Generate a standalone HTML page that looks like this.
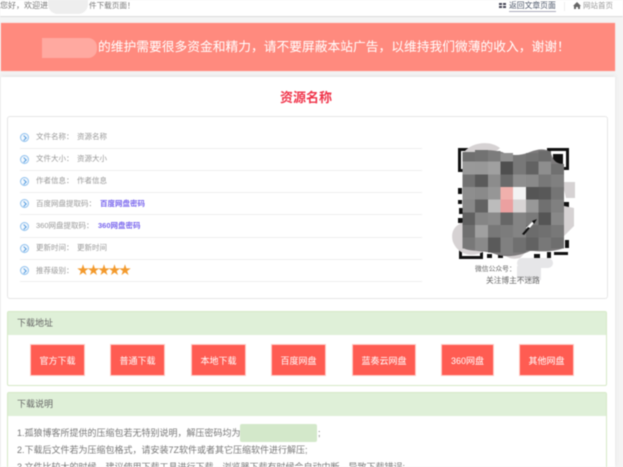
<!DOCTYPE html>
<html lang="zh"><head><meta charset="utf-8"><title>下载页面</title>
<style>
html,body{margin:0;padding:0;width:623px;height:467px;overflow:hidden;background:#f4f4f4}
body{font-family:"Liberation Sans","Noto Sans CJK SC",sans-serif;position:relative}
#w{position:absolute;left:0;top:0;width:623px;height:467px;overflow:hidden;filter:blur(.5px)}
.a{position:absolute;white-space:nowrap}
.r{position:absolute;left:20px;width:402px;height:1px;background:#eee}
.t{position:absolute;left:36px;font-size:7.5px;line-height:12px;color:#999;white-space:nowrap}
.v{position:absolute;font-size:7.5px;line-height:12px;color:#999;white-space:nowrap}
.v.k{color:#7b68ee;font-weight:bold}
.c{position:absolute;left:20px;width:9px;height:9px;border:1px solid #8fc1ee;border-radius:50%;box-sizing:border-box;background:#f4f9fe}
.c:after{content:"";position:absolute;left:1px;top:2px;width:3px;height:3px;border-top:1px solid #5a9fe0;border-right:1px solid #5a9fe0;transform:rotate(45deg)}
.b{position:absolute;top:344px;height:32px;line-height:32px;background:#ff5c52;border:1px solid #ffc9c4;box-sizing:border-box;color:#fff;font-size:9px;text-align:center}
.p{position:absolute;left:7px;width:600px;background:#fff;border:1px solid #d6e9c6;box-sizing:border-box;border-radius:2px}
.h{background:#dff0d8;height:23px;line-height:23px;padding-left:9px;font-size:9px;color:#666}
.l{position:absolute;left:17px;font-size:9px;line-height:14px;color:#777;white-space:nowrap}
</style></head><body><div id="w">
<div class="a" style="left:0;top:0;width:623px;height:16px;background:#fff;border-bottom:1px solid #ddd"></div>
<div class="a" style="left:0;top:0;font-size:8px;line-height:11px;color:#777">您好，欢迎进</div>
<div class="a" style="left:89px;top:0;font-size:7.6px;line-height:11px;color:#777">件下载页面！</div>
<div class="a" style="left:48px;top:0;width:40px;height:14px;background:#eee;border-radius:0 0 10px 10px"></div>
<svg class="a" style="left:499px;top:2px" width="8" height="8" viewBox="0 0 8 8"><path fill="#445" d="M0 1h3v2H0zM4 1h3v2H4zM0 4h3v2H0zM4 4h3v2H4z"/></svg>
<div class="a" style="left:509px;top:0;font-size:7.8px;line-height:11px;color:#4a5568;border-bottom:1px solid #aab">返回文章页面</div>
<svg class="a" style="left:573px;top:2px" width="8" height="8" viewBox="0 0 8 8"><path fill="#666" d="M4 0L0 4h1v3h2V5h2v2h2V4h1z"/></svg>
<div class="a" style="left:583px;top:0;font-size:7.5px;line-height:11px;color:#999">网站首页</div>
<div class="a" style="left:564px;top:2px;width:1px;height:9px;background:#eee"></div>

<div class="a" style="left:1px;top:23px;width:614px;height:48px;background:#ff8a7e;box-shadow:0 0 1px #fbb"></div>
<div class="a" style="left:98px;top:37px;font-size:12.75px;line-height:20px;color:#fff">的维护需要很多资金和精力，请不要屏蔽本站广告，以维持我们微薄的收入，谢谢！</div>
<div class="a" style="left:42px;top:38px;width:55px;height:20px;background:#ffa9a0;border-radius:0 9px 9px 0"></div>

<div class="a" style="left:1px;top:77px;width:614px;height:390px;background:#fff;box-shadow:0 -1px 4px #e2e2e2"></div>
<div class="a" style="left:236px;top:88px;width:140px;text-align:center;font-size:13px;line-height:20px;font-weight:bold;color:#f0344a">资源名称</div>

<div class="a" style="left:7px;top:116px;width:601px;height:183px;border:1px solid #e6e6e6;border-radius:3px;box-sizing:border-box"></div>

<div class="c" style="top:133px"></div><div class="t" style="top:131px">文件名称：</div><div class="v" style="left:77px;top:131px">资源名称</div><div class="r" style="top:148px"></div>
<div class="c" style="top:155px"></div><div class="t" style="top:153px">文件大小：</div><div class="v" style="left:77px;top:153px">资源大小</div><div class="r" style="top:170px"></div>
<div class="c" style="top:177px"></div><div class="t" style="top:175px">作者信息：</div><div class="v" style="left:77px;top:175px">作者信息</div><div class="r" style="top:192px"></div>
<div class="c" style="top:199px"></div><div class="t" style="top:198px">百度网盘提取码：</div><div class="v k" style="left:100px;top:198px">百度网盘密码</div><div class="r" style="top:214px"></div>
<div class="c" style="top:222px"></div><div class="t" style="top:220px">360网盘提取码：</div><div class="v k" style="left:98px;top:220px">360网盘密码</div><div class="r" style="top:237px"></div>
<div class="c" style="top:244px"></div><div class="t" style="top:242px">更新时间：</div><div class="v" style="left:77px;top:242px">更新时间</div><div class="r" style="top:259px"></div>
<div class="c" style="top:266px"></div><div class="t" style="top:265px">推荐级别：</div><div class="r" style="top:281px"></div>
<div class="a" style="left:77px;top:263px;font-size:12px;line-height:14px;letter-spacing:-1.5px;color:#f39a2d">★★★★★</div>

<svg class="a" style="left:450px;top:140px" width="125" height="125" viewBox="0 0 125 125" shape-rendering="crispEdges">
<g fill="#111">
<path fill-rule="evenodd" d="M8 8h24v24H8zM11 11v18h18V11zM97 8h22v22H97zM100 11v16h16V11zM9 95h24v24H9zM12 98v18h18V98z"/>
<path d="M103 14h10v10h-10zM15 101h12v12H15zM8 48h4v6H8zM8 60h4v4H8zM9 68h5v6H9zM8 78h6v5H8zM114 62h5v6h-5zM114 72h3v4h-3zM114 80h5v6h-5zM37 114h5v4h-5zM48 115h5v3h-5zM84 114h6v4h-6zM97 112h4v6h-4zM104 112h14v3h-14zM115 100h4v8h-4z"/>
</g></svg>
<svg class="a" style="left:450px;top:140px" width="125" height="125" viewBox="0 0 125 125">
<path fill="#d6d2d3" d="M14 12C22 2 40 0 50 8 40 18 25 20 14 12zM3 102c-3-10 2-18 12-20l18 10v20C20 118 8 114 3 102zM112 42h13v16h-9zM114 66l10 2v18l-10 10zM50 108h30l-10 10c-8 2-16 0-20-10z"/>
<path fill="#7c7a7b" d="M13 22C20 10 35 8 52 12 60 16 70 16 80 12 90 8 100 8 102 16 104 22 108 24 114 24V108C100 113 90 111 80 111 70 116 55 118 45 114 35 110 20 112 13 108z"/>
<g shape-rendering="crispEdges">
<rect x="12.5" y="12" width="12.7" height="9.7" fill="#6f6f6f"/><rect x="25.2" y="10" width="12.7" height="11.7" fill="#727272"/><rect x="37.9" y="11" width="12.7" height="10.7" fill="#7c7c7c"/><rect x="50.5" y="13" width="12.7" height="8.7" fill="#909090"/><rect x="63.2" y="15" width="12.7" height="6.7" fill="#787878"/><rect x="75.9" y="13" width="12.7" height="8.7" fill="#727272"/><rect x="88.5" y="11" width="12.7" height="10.7" fill="#6c6c6c"/>
<rect x="12.5" y="21.7" width="12.7" height="12.7" fill="#999"/><rect x="25.2" y="21.7" width="12.7" height="12.7" fill="#989898"/><rect x="37.9" y="21.7" width="12.7" height="12.7" fill="#a0a0a0"/><rect x="50.5" y="21.7" width="12.7" height="12.7" fill="#4f4f4f"/><rect x="63.2" y="21.7" width="12.7" height="12.7" fill="#787878"/><rect x="75.9" y="21.7" width="12.7" height="12.7" fill="#626262"/><rect x="88.5" y="21.7" width="12.7" height="12.7" fill="#8e8e8e"/><rect x="101.2" y="24" width="12.7" height="10.4" fill="#707070"/>
<rect x="12.5" y="34.3" width="12.7" height="12.7" fill="#727272"/><rect x="25.2" y="34.3" width="12.7" height="12.7" fill="#5a5a5a"/><rect x="37.9" y="34.3" width="12.7" height="12.7" fill="#8c8c8c"/><rect x="50.5" y="34.3" width="12.7" height="12.7" fill="#6a6a6a"/><rect x="63.2" y="34.3" width="12.7" height="12.7" fill="#8e8e8e"/><rect x="75.9" y="34.3" width="12.7" height="12.7" fill="#8a8a8a"/><rect x="88.5" y="34.3" width="12.7" height="12.7" fill="#787878"/><rect x="101.2" y="34.3" width="12.7" height="12.7" fill="#808080"/>
<rect x="12.5" y="47" width="12.7" height="12.7" fill="#8e8e8e"/><rect x="25.2" y="47" width="12.7" height="12.7" fill="#8a8a8a"/><rect x="37.9" y="47" width="12.7" height="12.7" fill="#969696"/><rect x="50.5" y="47" width="12.7" height="12.7" fill="#f0b0ac"/><rect x="63.2" y="47" width="12.7" height="12.7" fill="#f3f3f3"/><rect x="75.9" y="47" width="12.7" height="12.7" fill="#555"/><rect x="88.5" y="47" width="12.7" height="12.7" fill="#585858"/><rect x="101.2" y="47" width="12.7" height="12.7" fill="#757575"/>
<rect x="12.5" y="59.7" width="12.7" height="12.7" fill="#888"/><rect x="25.2" y="59.7" width="12.7" height="12.7" fill="#626262"/><rect x="37.9" y="59.7" width="12.7" height="12.7" fill="#bcbcbc"/><rect x="50.5" y="59.7" width="12.7" height="12.7" fill="#eba0a0"/><rect x="63.2" y="59.7" width="12.7" height="12.7" fill="#d8d4d4"/><rect x="75.9" y="59.7" width="12.7" height="12.7" fill="#989898"/><rect x="88.5" y="59.7" width="12.7" height="12.7" fill="#707070"/><rect x="101.2" y="59.7" width="12.7" height="12.7" fill="#808080"/>
<rect x="12.5" y="72.3" width="12.7" height="12.7" fill="#606060"/><rect x="25.2" y="72.3" width="12.7" height="12.7" fill="#858585"/><rect x="37.9" y="72.3" width="12.7" height="12.7" fill="#8a8a8a"/><rect x="50.5" y="72.3" width="12.7" height="12.7" fill="#666"/><rect x="63.2" y="72.3" width="12.7" height="12.7" fill="#848484"/><rect x="75.9" y="72.3" width="12.7" height="12.7" fill="#7a7a7a"/><rect x="88.5" y="72.3" width="12.7" height="12.7" fill="#555"/><rect x="101.2" y="72.3" width="12.7" height="12.7" fill="#888"/>
<rect x="12.5" y="85" width="12.7" height="12.7" fill="#707070"/><rect x="25.2" y="85" width="12.7" height="12.7" fill="#a0a0a0"/><rect x="37.9" y="85" width="12.7" height="12.7" fill="#787878"/><rect x="50.5" y="85" width="12.7" height="12.7" fill="#7c7c7c"/><rect x="63.2" y="85" width="12.7" height="12.7" fill="#848484"/><rect x="75.9" y="85" width="12.7" height="12.7" fill="#6c6c6c"/><rect x="88.5" y="85" width="12.7" height="12.7" fill="#707070"/><rect x="101.2" y="85" width="12.7" height="12.7" fill="#787878"/>
<rect x="12.5" y="97.7" width="12.7" height="10.7" fill="#787878"/><rect x="25.2" y="97.7" width="12.7" height="12.7" fill="#8a8a8a"/><rect x="37.9" y="97.7" width="12.7" height="15" fill="#5a5a5a"/><rect x="50.5" y="97.7" width="12.7" height="17" fill="#808080"/><rect x="63.2" y="97.7" width="12.7" height="15" fill="#707070"/><rect x="75.9" y="97.7" width="12.7" height="12.7" fill="#626262"/><rect x="88.5" y="97.7" width="12.7" height="12.7" fill="#787878"/><rect x="101.2" y="97.7" width="12.7" height="11" fill="#6e6e6e"/>
</g>
<path fill="#fff" d="M76 88l6-6 2 1-6 7z"/>
<path fill="#111" d="M72 94l6-7 2 1-6 7zM82 81l5-2-3 5z"/>
</svg>

<div class="a" style="left:517px;top:258px;width:36px;height:10px;background:#e6e6e8;border-radius:6px"></div>
<div class="a" style="left:517px;top:266px;width:24px;height:14px;background:#e6e6e8"></div>
<div class="a" style="left:475px;top:264px;font-size:6.8px;line-height:11px;color:#666">微信公众号：</div>
<div class="a" style="left:486px;top:275px;font-size:7.7px;line-height:11px;color:#666">关注博主不迷路</div>

<div class="p" style="top:311px;height:75px"><div class="h">下载地址</div></div>
<div class="b" style="left:30px;width:55px">官方下载</div>
<div class="b" style="left:110px;width:55px">普通下载</div>
<div class="b" style="left:191px;width:55px">本地下载</div>
<div class="b" style="left:271px;width:55px">百度网盘</div>
<div class="b" style="left:352px;width:64px">蓝奏云网盘</div>
<div class="b" style="left:441px;width:53px">360网盘</div>
<div class="b" style="left:519px;width:55px">其他网盘</div>

<div class="p" style="top:392px;height:90px"><div class="h">下载说明</div></div>
<div class="l" style="top:426px">1.孤狼博客所提供的压缩包若无特别说明，解压密码均为</div>
<div class="a" style="left:240px;top:424px;width:77px;height:18px;background:#d3e8ca;border-radius:2px"></div>
<div class="l" style="left:318px;top:426px">;</div>
<div class="l" style="top:443px">2.下载后文件若为压缩包格式，请安装7Z软件或者其它压缩软件进行解压;</div>
<div class="l" style="top:460px">3.文件比较大的时候，建议使用下载工具进行下载，浏览器下载有时候会自动中断，导致下载错误;</div>
</div></body></html>
